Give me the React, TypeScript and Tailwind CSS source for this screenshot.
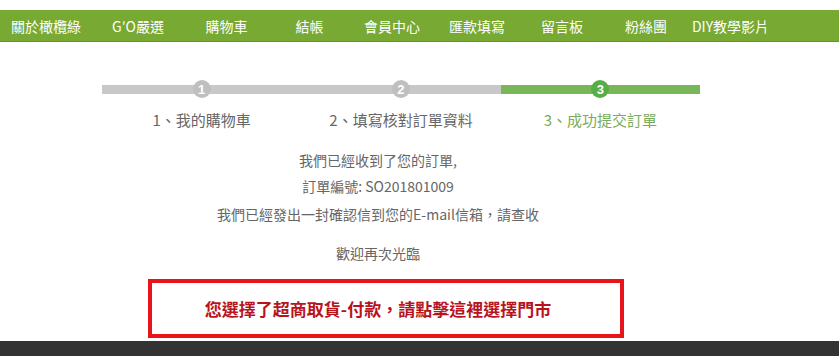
import React from 'react';

const NAV_ITEMS = [
  { label: '關於橄欖綠', w: 'w-[92px]' },
  { label: 'G\u2032O嚴選', w: 'w-[92px]' },
  { label: '購物車', w: 'w-[85px]' },
  { label: '結帳', w: 'w-[81px]' },
  { label: '會員中心', w: 'w-[84px]' },
  { label: '匯款填寫', w: 'w-[86px]' },
  { label: '留言板', w: 'w-[84px]' },
  { label: '粉絲團', w: 'w-[84px]' },
  { label: 'DIY教學影片', w: 'w-[85px]' },
];

const STEPS = [
  { no: 1, label: '1、我的購物車', done: false },
  { no: 2, label: '2、填寫核對訂單資料', done: false },
  { no: 3, label: '3、成功提交訂單', done: true },
];

const font = { fontFamily: '"Microsoft JhengHei", "Noto Sans CJK TC", "Noto Sans", sans-serif' };

export default function App() {
  return (
    <div className="w-[839px] h-[356px] bg-white overflow-hidden flex flex-col" style={font}>
      {/* 導覽列 */}
      <div className="mt-[10px] h-[32px] bg-[#77a933] flex items-center border-b border-[#6a8f3a]">
        {NAV_ITEMS.map(item => (
          <div key={item.label} className={`${item.w} text-center text-white text-[14px] leading-none`}>
            {item.label}
          </div>
        ))}
      </div>

      <div className="w-[800px] flex flex-col flex-1">
        {/* 步驟 */}
        <div className="mt-[38px] ml-[102px] w-[598px] flex">
          {STEPS.map(step => (
            <div key={step.no} className="flex-1 flex flex-col items-center">
              <div className="relative w-full h-[18px] flex items-center justify-center">
                <div className={`absolute left-0 right-0 h-[9px] ${step.done ? 'bg-[#78b55b]' : 'bg-[#c8c8c8]'}`} />
                <div
                  className={`relative w-[18px] h-[18px] rounded-full flex items-center justify-center text-white text-[13px] font-bold leading-none ${
                    step.done ? 'bg-[#57ad46]' : 'bg-[#bfbfbf]'
                  }`}
                  style={{ fontFamily: '"Liberation Sans", Arial, sans-serif' }}
                >
                  {step.no}
                </div>
              </div>
              <div className={`mt-[14px] text-[15px] leading-none ${step.done ? 'text-[#7aab5a]' : 'text-[#666]'}`}>
                {step.label}
              </div>
            </div>
          ))}
        </div>

        {/* 訊息 */}
        <div className="mt-[26px] w-[756px] flex flex-col items-center text-[14px] text-[#666] leading-none">
          <p>我們已經收到了您的訂單,</p>
          <p className="mt-[12px]">訂單編號: SO201801009</p>
          <p className="mt-[14px]">我們已經發出一封確認信到您的E-mail信箱，請查收</p>
          <p className="mt-[25px]">歡迎再次光臨</p>
        </div>

        <div className="mt-[19px] ml-[148px] w-[476px] h-[59px] border-[4px] border-[#e8141a] flex items-center justify-center pr-[16px]">
          <span className="text-[17px] font-bold text-[#b8141e] leading-none">
            您選擇了超商取貨-付款，請點擊這裡選擇門市
          </span>
        </div>
      </div>

      <div className="h-[15px] bg-[#333333] mt-auto" />
    </div>
  );
}
